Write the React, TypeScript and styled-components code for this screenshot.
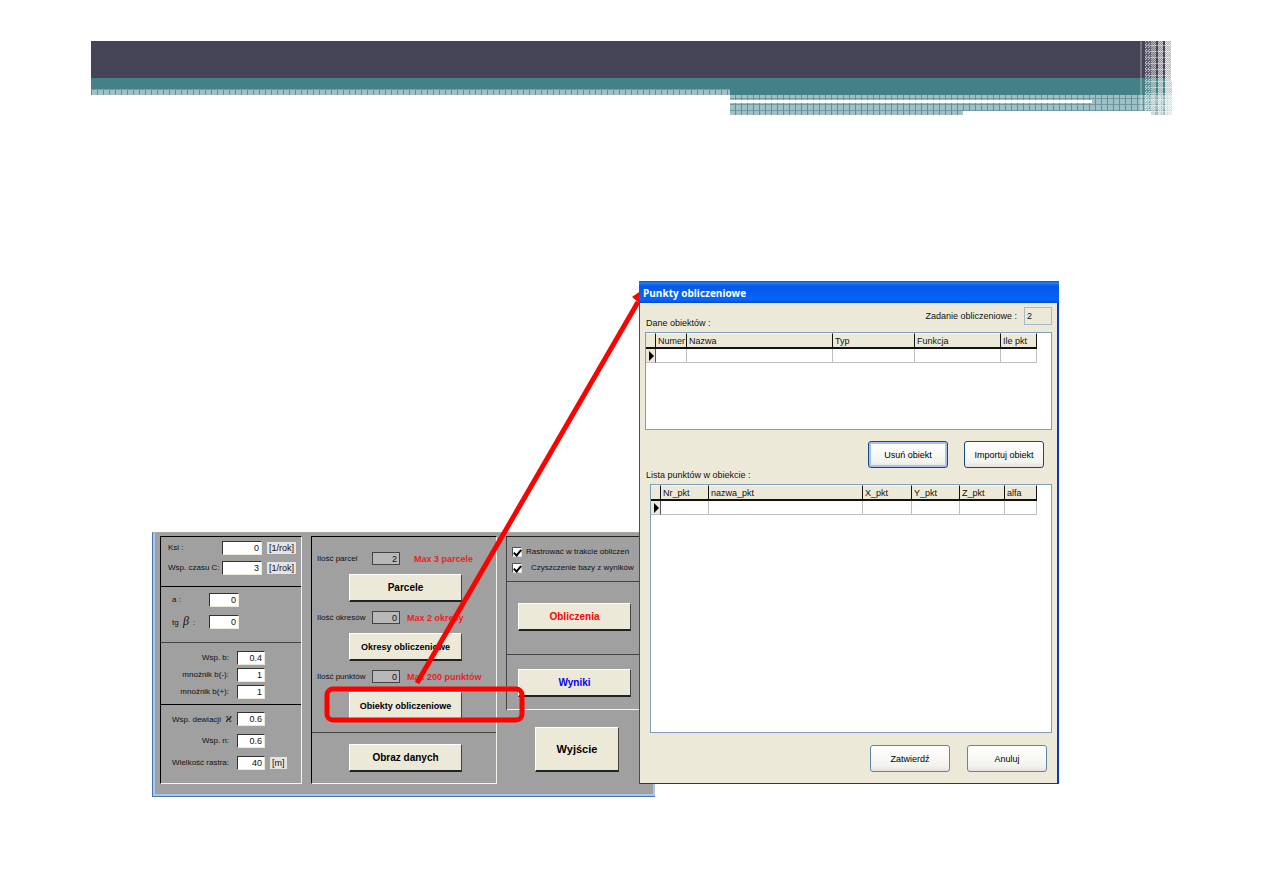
import React from "react";
import styled, { createGlobalStyle } from "styled-components";

const GlobalStyle = createGlobalStyle`
  * { box-sizing: border-box; }
  body { margin: 0; background: #fff; color: #111; font: 9px/12px "Liberation Sans", Arial, sans-serif; }
  button, input { font: inherit; color: inherit; margin: 0; border-radius: 0; }
`;

const Slide = styled.main`
  padding: 41px 91px 96px;
`;

/* ---------- banner ---------- */
const Banner = styled.header`
  position: relative;
`;
const DarkBar = styled.div`
  height: 37px;
  background: #454456;
`;
const TealBar = styled.div`
  height: 11px;
  background: #438087;
`;
const BannerFoot = styled.div`
  display: flex;
  align-items: flex-start;
`;
const hatch = `
  background-color: #a3bfc3;
  background-image: linear-gradient(90deg, #5d949a 1px, transparent 1px);
  background-size: 6px 6px;
`;
const LeftHatch = styled.div`
  flex: 0 0 639px;
  height: 6px;
  ${hatch}
  border-top: 1px solid #6fa2a7;
`;
const RightFoot = styled.div`
  flex: 1;
  border-top: 6px solid #438087;
`;
const RightHatch = styled.div`
  height: 20px;
  padding-top: 5px;
  ${hatch}
  background-image: linear-gradient(90deg, #5d949a 1px, transparent 1px), linear-gradient(transparent 3px, #6b9ea4 3px, #6b9ea4 4px, transparent 4px);
  background-position: 5px 0, 0 0;
`;
const UpperGap = styled.div`
  width: 362px;
  height: 3px;
  background: #fff;
`;
const LowerGap = styled.div`
  height: 4px;
  margin: 8px 21px 0 233px;
  background: #fff;
`;
const Fade = styled.svg`
  position: absolute;
  top: 0;
  right: 0;
`;

/* ---------- windows ---------- */
const Stage = styled.div`
  position: relative;
  height: 682px;
`;
const FormWindow = styled.form`
  position: absolute;
  left: 61px;
  top: 417px;
  width: 503px;
  height: 265px;
  display: grid;
  grid-template-columns: 142px 186px 1fr;
  gap: 9px;
  padding: 3px 0 12px 7px;
  background: #a0a0a0;
  border-top: 1px solid #a7ab9f;
  border-left: 1px solid #4a72a8;
  border-bottom: 1px solid #4a72a8;
  box-shadow: inset 2px 0 #a9c6ee, inset 0 -2px #a9c6ee, inset -2px 0 #a9c6ee;
  margin: 0;
  label { font-size: 8px; }
`;
const Panel = styled.div`
  border: 1px solid #f4f4ec;
  border-top-color: #000;
  border-left-color: #000;
`;
const Section = styled.div<{ $h?: number; $line?: string; $top: number }>`
  height: ${(p) => (p.$h ? p.$h + "px" : "auto")};
  padding-top: ${(p) => p.$top}px;
  border-bottom: ${(p) => (p.$line ? `1px solid ${p.$line}` : "0")};
`;
const FieldRow = styled.div<{ $label: number; $gap: number; $right?: boolean; $inset: number }>`
  display: grid;
  grid-template-columns: ${(p) => p.$label}px auto auto 1fr;
  align-items: center;
  height: 14px;
  margin-bottom: ${(p) => p.$gap}px;
  label {
    white-space: nowrap;
    padding: ${(p) => (p.$right ? "0 8px 0 0" : `0 0 0 ${p.$inset}px`)};
    text-align: ${(p) => (p.$right ? "right" : "left")};
  }
`;
const NumberBox = styled.input<{ $w: number }>`
  width: ${(p) => p.$w}px;
  height: 14px;
  padding: 0 2px;
  text-align: right;
  background: #fff;
  border: 1px solid #ece9d8;
  border-top: 1px solid #333;
  border-left: 1px solid #333;
`;
const Unit = styled.span`
  margin-left: 5px;
  padding: 0 2px;
  background: #e4e4e4;
`;
const Greek = styled.i`
  font: italic 12px/12px "Liberation Serif", serif;
  margin: 0 2px;
`;

const CountGroup = styled.div`
  display: flex;
  flex-direction: column;
  align-items: center;
  gap: 9px;
  margin-bottom: 9px;
`;
const CountRow = styled.div`
  align-self: stretch;
  display: grid;
  grid-template-columns: 60px 28px 1fr;
  align-items: center;
  height: 13px;
  label { padding-left: 5px; white-space: nowrap; }
`;
const CountBox = styled.input`
  width: 28px;
  height: 13px;
  padding: 0 2px;
  text-align: right;
  background: #b8b8b8;
  border: 1px solid #444;
`;
const Limit = styled.strong<{ $inset: number }>`
  padding-left: ${(p) => p.$inset}px;
  color: #ee1c24;
  white-space: nowrap;
`;
const Raised = styled.button<{ $size?: number; $color?: string; $big?: boolean }>`
  display: block;
  width: ${(p) => (p.$big ? 84 : 113)}px;
  height: ${(p) => (p.$big ? 45 : 28)}px;
  padding: 0;
  background: #ece9d8;
  color: ${(p) => p.$color ?? "#000"};
  border: 1px solid #fff;
  border-right-color: #444;
  border-bottom: 2px solid #222;
  font: bold ${(p) => p.$size ?? 10}px/12px "Liberation Sans", Arial, sans-serif;
`;
const Centered = styled.div`
  display: flex;
  justify-content: center;
  padding-left: 3px;
`;
const ActionColumn = styled.div`
  display: flex;
  flex-direction: column;
`;
const ActionPanel = styled.div`
  border-left: 1px solid #444;
  border-top: 1px solid #222;
`;
const ActionInset = styled.div<{ $x: number; $y?: number }>`
  padding: ${(p) => p.$y ?? 0}px 0 0 ${(p) => p.$x}px;
`;
const CheckRow = styled.label<{ $gap: number }>`
  display: flex;
  align-items: center;
  gap: ${(p) => p.$gap}px;
  height: 16px;
  padding-left: 5px;
  white-space: nowrap;
`;
const CheckBox = styled.input`
  appearance: none;
  width: 10px;
  height: 10px;
  background: #fff;
  border: 1px solid #555;
  border-right-color: #ddd;
  border-bottom-color: #ddd;
  display: grid;
  place-items: center;
  &:checked::after {
    content: "";
    width: 3px;
    height: 6px;
    border: solid #000;
    border-width: 0 2px 2px 0;
    transform: rotate(40deg);
  }
`;

const Annotation = styled.svg`
  position: absolute;
  left: 0;
  top: 0;
  pointer-events: none;
`;

/* ---------- dialog ---------- */
const Dialog = styled.section`
  position: absolute;
  left: 548px;
  top: 166px;
  width: 420px;
  height: 503px;
  display: flex;
  flex-direction: column;
  background: #ece9d8;
  border-style: solid;
  border-width: 0 2px 1px 1px;
  border-color: #0831d9 #0a35cc #0831d9 #0855dd;
`;
const TitleBar = styled.h1`
  margin: 0 -2px 0 -1px;
  height: 22px;
  padding: 2px 4px 0;
  color: #fff;
  font: bold 10px/20px "Open Sans", "Liberation Sans", sans-serif;
  background: linear-gradient(#0a54d8 0, #2a7cf4 2px, #0458e6 5px, #0560f4 14px, #0566fc 19px, #0348c8 22px);
`;
const DialogBody = styled.div`
  flex: 1;
  display: flex;
  flex-direction: column;
  padding: 4px 5px 11px;
`;
const TaskRow = styled.div`
  display: flex;
  justify-content: flex-end;
  align-items: center;
  gap: 7px;
  height: 17px;
`;
const TaskBox = styled.input`
  width: 28px;
  height: 18px;
  padding: 0 2px;
  background: #ece9d8;
  border: 1px solid #a9b9c3;
`;
const Caption = styled.h2<{ $up?: boolean }>`
  margin: ${(p) => (p.$up ? "-7px" : "1px")} 0 2px 1px;
  font-size: inherit;
  font-weight: normal;
  line-height: 13px;
`;
const GridBox = styled.div<{ $h?: number; $inset?: number }>`
  height: ${(p) => (p.$h ? p.$h + "px" : "auto")};
  flex: ${(p) => (p.$h ? "none" : "1")};
  margin-left: ${(p) => p.$inset ?? 0}px;
  background: #fff;
  border: 1px solid #7f9db9;
`;
const DataTable = styled.table`
  table-layout: fixed;
  border-collapse: separate;
  border-spacing: 0;
  th, td { padding: 0 2px; height: 14px; white-space: nowrap; }
  th {
    height: 16px;
    text-align: left;
    font-weight: normal;
    background: #ece9d8;
    border-top: 1px solid #f8f7f0;
    border-right: 1px solid #111;
    border-bottom: 2px solid #111;
  }
  td {
    border-right: 1px solid #c0c0c0;
    border-bottom: 1px solid #c0c0c0;
  }
  td:first-child { background: #ece9d8; padding: 0 0 0 3px; border-right-color: #555; }
  svg { display: block; }
`;
const ButtonRow = styled.div<{ $gap: number; $right: number; $top: number }>`
  display: flex;
  justify-content: flex-end;
  gap: ${(p) => p.$gap}px;
  padding: ${(p) => p.$top}px ${(p) => p.$right}px 0 0;
`;
const XpButton = styled.button<{ $focus?: boolean; $soft?: boolean }>`
  width: 80px;
  height: 27px;
  padding: 0;
  color: #000;
  background: linear-gradient(#fff, #f3f3ee 80%, #e4e2da);
  border: 1px solid ${(p) => (p.$soft ? "#5f86a8" : "#164a7c")};
  border-radius: 3px;
  box-shadow: ${(p) => (p.$focus ? "inset 0 0 0 2px #a9c0f0" : "none")};
`;

type FieldProps = { id: string; label: React.ReactNode; value: string; at: number; w: number; gap: number; unit?: string; right?: boolean; inset?: number };
const Field = ({ id, label, value, at, w, gap, unit, right, inset = 7 }: FieldProps) => (
  <FieldRow $label={at} $gap={gap} $right={right} $inset={inset}>
    <label htmlFor={id}>{label}</label>
    <NumberBox id={id} defaultValue={value} $w={w} />
    {unit && <Unit>{unit}</Unit>}
  </FieldRow>
);

type CountProps = { id: string; label: string; value: string; limit: string; inset: number; action: string; size: number };
const Count = ({ id, label, value, limit, inset, action, size }: CountProps) => (
  <CountGroup>
    <CountRow>
      <label htmlFor={id}>{label}</label>
      <CountBox id={id} value={value} readOnly />
      <Limit $inset={inset}>{limit}</Limit>
    </CountRow>
    <Centered><Raised type="button" $size={size}>{action}</Raised></Centered>
  </CountGroup>
);

type Column = [string, number];
const DataGrid = ({ columns }: { columns: Column[] }) => (
  <DataTable style={{ width: columns.reduce((sum, c) => sum + c[1], 0) }}>
    <colgroup>{columns.map(([name, w]) => <col key={name} width={w} />)}</colgroup>
    <thead><tr>{columns.map(([name]) => <th key={name} scope="col">{name}</th>)}</tr></thead>
    <tbody>
      <tr>
        {columns.map(([name], i) => (
          <td key={name}>{i === 0 && <svg width="6" height="10" viewBox="0 0 6 10"><path d="M0 0 5 5 0 10z" /></svg>}</td>
        ))}
      </tr>
    </tbody>
  </DataTable>
);

const objectColumns: Column[] = [["", 10], ["Numer", 31], ["Nazwa", 146], ["Typ", 82], ["Funkcja", 86], ["Ile pkt", 36]];
const pointColumns: Column[] = [["", 10], ["Nr_pkt", 48], ["nazwa_pkt", 154], ["X_pkt", 49], ["Y_pkt", 48], ["Z_pkt", 45], ["alfa", 32]];

const BannerFade = () => (
  <Fade width="33" height="74" viewBox="0 0 33 74" shapeRendering="crispEdges" aria-hidden="true">
    <defs>
      <pattern id="sparse" width="3" height="3" patternUnits="userSpaceOnUse"><path fill="#fff" d="M0 0h1v1H0zM1 2h1v1H1z" /></pattern>
      <pattern id="check" width="2" height="2" patternUnits="userSpaceOnUse"><path fill="#fff" d="M0 0h1v1H0zM1 1h1v1H1z" /></pattern>
      <pattern id="lines" width="6" height="6" patternUnits="userSpaceOnUse"><path fill="#fff" d="M0 4h6v1H0z" /></pattern>
    </defs>
    <path fill="#fff" opacity=".25" d="M1 0h2v74H1z" />
    <path fill="#fff" opacity=".15" d="M6 0h6v74H6z" />
    <path fill="url(#sparse)" opacity=".6" d="M6 0h6v74H6z" />
    <path fill="#fff" opacity=".3" d="M12 0h5v74h-5z" />
    <path fill="url(#check)" opacity=".4" d="M12 0h5v74h-5z" />
    <path fill="#fff" opacity=".4" d="M19 0h5v74h-5z" />
    <path fill="url(#check)" opacity=".5" d="M19 0h5v74h-5z" />
    <path fill="#fff" opacity=".6" d="M26 0h7v74h-7z" />
    <path fill="url(#check)" opacity=".6" d="M26 0h7v74h-7z" />
    <path fill="url(#lines)" opacity=".4" d="M6 0h27v74H6z" />
    <path fill="#fff" d="M32 0h1v40h-1z" />
  </Fade>
);

export default function App() {
  return (
    <>
      <GlobalStyle />
      <Slide>
        <Banner>
          <DarkBar />
          <TealBar />
          <BannerFoot>
            <LeftHatch />
            <RightFoot>
              <RightHatch><UpperGap /><LowerGap /></RightHatch>
            </RightFoot>
          </BannerFoot>
          <BannerFade />
        </Banner>
        <Stage>
          <FormWindow>
            <Panel>
              <Section $h={50} $top={4} $line="#000">
                <Field id="ksi" label="Ksi :" value="0" at={61} w={40} gap={6} unit="[1/rok]" />
                <Field id="czas" label="Wsp. czasu C:" value="3" at={61} w={40} gap={0} unit="[1/rok]" />
              </Section>
              <Section $h={56} $top={6} $line="#444">
                <Field id="a" label="a :" value="0" at={48} w={30} gap={8} inset={11} />
                <Field id="beta" label={<>tg <Greek>β</Greek> :</>} value="0" at={48} w={30} gap={0} inset={11} />
              </Section>
              <Section $h={62} $top={8} $line="#000">
                <Field id="b" label="Wsp. b:" value="0.4" at={76} w={28} gap={3} right />
                <Field id="bm" label="mnożnik b(-):" value="1" at={76} w={28} gap={3} right />
                <Field id="bp" label="mnożnik b(+):" value="1" at={76} w={28} gap={0} right />
              </Section>
              <Section $top={7}>
                <Field id="dew" label={<>Wsp. dewiacji <Greek>ϰ</Greek></>} value="0.6" at={76} w={28} gap={8} inset={11} />
                <Field id="n" label="Wsp. n:" value="0.6" at={76} w={28} gap={8} right />
                <Field id="raster" label="Wielkość rastra:" value="40" at={76} w={28} gap={0} unit="[m]" right />
              </Section>
            </Panel>
            <Panel>
              <Section $h={196} $top={15} $line="#444">
                <Count id="parcele" label="Ilość parcel" value="2" limit="Max 3 parcele" inset={14} action="Parcele" size={10} />
                <Count id="okresy" label="Ilość okresów" value="0" limit="Max 2 okresy" inset={7} action="Okresy obliczeniowe" size={9} />
                <Count id="punkty" label="Ilość punktów" value="0" limit="Max 200 punktów" inset={7} action="Obiekty obliczeniowe" size={9} />
              </Section>
              <Section $top={11}>
                <Centered><Raised type="button">Obraz danych</Raised></Centered>
              </Section>
            </Panel>
            <ActionColumn>
              <ActionPanel>
                <Section $h={45} $top={7} $line="#444">
                  <CheckRow $gap={4}><CheckBox type="checkbox" defaultChecked />Rastrować w trakcie obliczeń</CheckRow>
                  <CheckRow $gap={9}><CheckBox type="checkbox" defaultChecked />Czyszczenie bazy z wyników</CheckRow>
                </Section>
                <Section $h={73} $top={21} $line="#444">
                  <ActionInset $x={11}><Raised type="button" $color="#f00">Obliczenia</Raised></ActionInset>
                </Section>
                <Section $h={55} $top={14} $line="#f4f4ec">
                  <ActionInset $x={11}><Raised type="button" $color="#00f">Wyniki</Raised></ActionInset>
                </Section>
              </ActionPanel>
              <ActionInset $x={29} $y={17}><Raised type="button" $big $size={11}>Wyjście</Raised></ActionInset>
            </ActionColumn>
          </FormWindow>

          <Annotation width="564" height="682" viewBox="0 0 564 682" aria-hidden="true">
            <path d="M326 568 547 187" stroke="#f00" strokeWidth="5" />
            <path d="M551 175 541 182 553 192z" fill="#f00" />
            <rect x="236" y="574" width="195" height="31" rx="6" fill="none" stroke="#f00" strokeWidth="5" />
          </Annotation>

          <Dialog>
            <TitleBar>Punkty obliczeniowe</TitleBar>
            <DialogBody>
              <TaskRow>
                <label htmlFor="zadanie">Zadanie obliczeniowe :</label>
                <TaskBox id="zadanie" value="2" readOnly />
              </TaskRow>
              <Caption $up>Dane obiektów :</Caption>
              <GridBox $h={98}><DataGrid columns={objectColumns} /></GridBox>
              <ButtonRow $gap={16} $right={8} $top={11}>
                <XpButton type="button" $focus>Usuń obiekt</XpButton>
                <XpButton type="button">Importuj obiekt</XpButton>
              </ButtonRow>
              <Caption>Lista punktów w obiekcie :</Caption>
              <GridBox $inset={5}><DataGrid columns={pointColumns} /></GridBox>
              <ButtonRow $gap={17} $right={5} $top={12}>
                <XpButton type="button" $soft>Zatwierdź</XpButton>
                <XpButton type="button" $soft>Anuluj</XpButton>
              </ButtonRow>
            </DialogBody>
          </Dialog>
        </Stage>
      </Slide>
    </>
  );
}
